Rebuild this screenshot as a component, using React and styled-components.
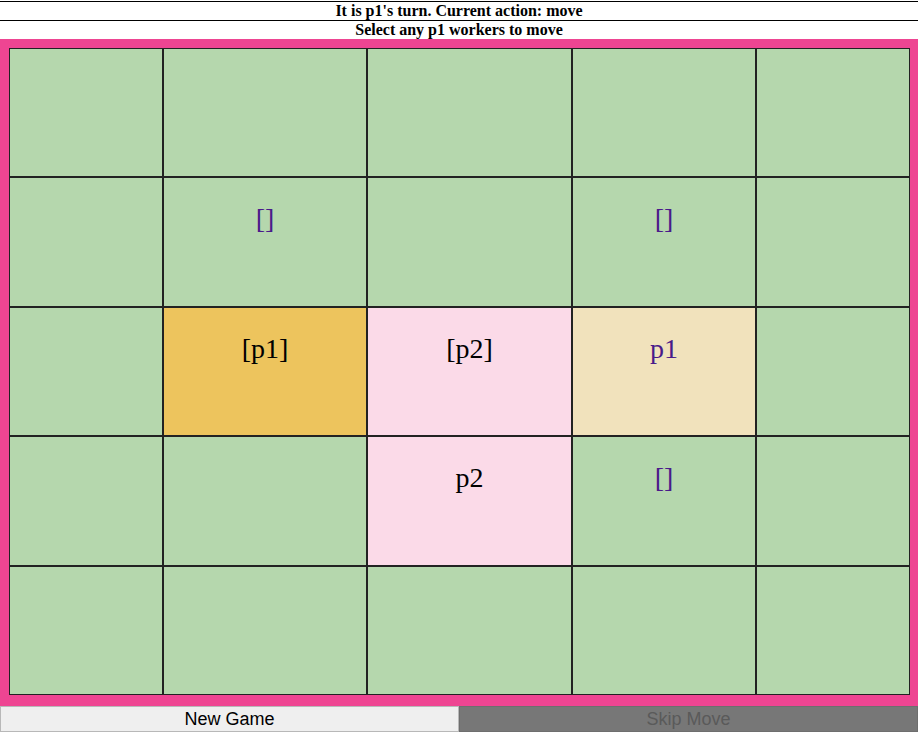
import React from 'react'
import styled, { createGlobalStyle } from 'styled-components'

const GlobalStyle = createGlobalStyle`
  body {
    margin: 0;
    background: #fff;
    font-family: "Liberation Serif", "Times New Roman", serif;
  }
`

const Header = styled.div`
  padding-top: 1px;
`

const Status = styled.div`
  border-top: 1px solid #000;
  height: 18px;
  line-height: 18px;
  text-align: center;
  font-size: 16px;
  font-weight: bold;
  color: #000;
  overflow: hidden;
`

const Frame = styled.div`
  background: #ee4592;
  padding: 9px 8px 11px 9px;
`

const Board = styled.div`
  display: grid;
  grid-template-columns: 152fr 202fr 203fr 182fr 152fr;
  grid-template-rows: repeat(5, 1fr);
  gap: 2px;
  height: 645px;
  border: 1px solid #222;
  background: #222;
`

const tones = {
  grass: '#b5d7ad',
  picked: '#edc45d',
  rival: '#fbdae8',
  target: '#f1e2bc',
}

const Cell = styled.div`
  background: ${p => tones[p.$tone]};
  text-align: center;
  padding-top: 25px;
  font-size: 28px;
  line-height: 32px;
  color: ${p => (p.$mark ? '#4a1a8a' : '#000')};
`

const Controls = styled.div`
  display: grid;
  grid-template-columns: 459px 1fr;
  height: 26px;
`

const Button = styled.button`
  font-family: "Liberation Sans", Arial, sans-serif;
  font-size: 18px;
  border: 1px solid ${p => (p.disabled ? '#6e6e6e' : '#b8b8b8')};
  background: ${p => (p.disabled ? '#777777' : '#efefef')};
  color: ${p => (p.disabled ? '#5a5a5a' : '#000')};
  padding: 0;
  margin: 0;
`

const cells = [
  [{}, {}, {}, {}, {}],
  [{}, { text: '[]', mark: true }, {}, { text: '[]', mark: true }, {}],
  [
    {},
    { tone: 'picked', text: '[p1]' },
    { tone: 'rival', text: '[p2]' },
    { tone: 'target', text: 'p1', mark: true },
    {},
  ],
  [{}, {}, { tone: 'rival', text: 'p2' }, { text: '[]', mark: true }, {}],
  [{}, {}, {}, {}, {}],
]

const App = () => {
  return (
    <>
      <GlobalStyle />
      <Header>
        <Status>It is p1's turn. Current action: move</Status>
        <Status>Select any p1 workers to move</Status>
      </Header>
      <Frame>
        <Board>
          {cells.map((row, r) =>
            row.map((c, i) => (
              <Cell key={`${r}-${i}`} $tone={c.tone || 'grass'} $mark={c.mark}>
                {c.text}
              </Cell>
            ))
          )}
        </Board>
      </Frame>
      <Controls>
        <Button>New Game</Button>
        <Button disabled>Skip Move</Button>
      </Controls>
    </>
  )
}

export default App
